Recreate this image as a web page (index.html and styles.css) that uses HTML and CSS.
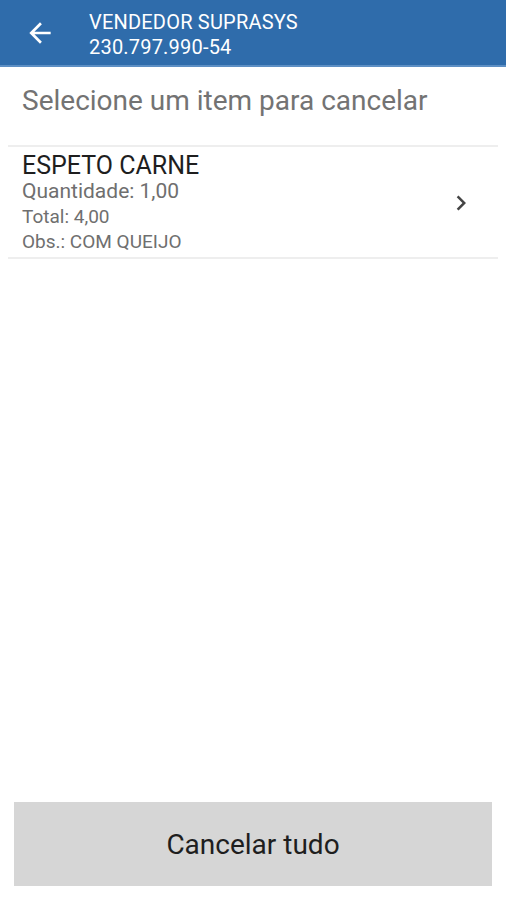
FILE: index.html
```html
<!DOCTYPE html>
<html lang="pt-BR">
<head>
    <meta charset="UTF-8">
    <meta name="viewport" content="width=device-width, initial-scale=1.0">
    <title>Cancelar item</title>
    <link rel="stylesheet" href="styles.css">
</head>
<body>
    <!-- barra superior -->
    <header class="app-bar">
        <button class="back-btn" aria-label="Voltar">
            <svg width="32" height="32" viewBox="0 0 24 24">
                <path d="M20 11H7.83l5.59-5.59L12 4l-8 8 8 8 1.41-1.41L7.83 13H20v-2z" fill="#fff"/>
            </svg>
        </button>
        <div class="app-title">
            <div>VENDEDOR SUPRASYS</div>
            <div>230.797.990-54</div>
        </div>
    </header>

    <main class="content">
        <p class="hint">Selecione um item para cancelar</p>

        <ul class="item-list">
            <li class="item-row">
                <div class="item-info">
                    <div class="item-name">ESPETO CARNE</div>
                    <div class="item-qty">Quantidade: 1,00</div>
                    <div class="item-small">Total: 4,00</div>
                    <div class="item-small">Obs.: COM QUEIJO</div>
                </div>
                <svg class="chevron" width="30" height="30" viewBox="0 0 24 24">
                    <path d="M8.59 16.59 13.17 12 8.59 7.41 10 6l6 6-6 6z" fill="#444"/>
                </svg>
            </li>
        </ul>
    </main>

    <div class="footer">
        <button class="cancel-all">Cancelar tudo</button>
    </div>
</body>
</html>
```
FILE: styles.css
```css
* {
    margin: 0;
    padding: 0;
    box-sizing: border-box;
}

body {
    height: 900px;
    display: flex;
    flex-direction: column;
    background: #fff;
    font-family: Roboto, 'Liberation Sans', sans-serif;
}

/* barra superior */
.app-bar {
    height: 67px;
    background: #2f6cab;
    border-bottom: 2px solid #5d8fc4;
    display: flex;
    align-items: center;
    color: #fff;
}

.back-btn {
    width: 48px;
    height: 48px;
    margin-left: 16px;
    margin-right: 25px;
    background: none;
    border: none;
    display: flex;
    align-items: center;
    justify-content: center;
}

.app-title {
    font-size: 20px;
    letter-spacing: 0.2px;
    line-height: 25px;
    margin-top: 4px;
}

/* conteudo */
.content {
    flex: 1;
    padding: 0 8px;
}

.hint {
    font-size: 28px;
    color: #737373;
    padding: 17px 14px 0;
    height: 78px;
}

.item-list {
    list-style: none;
    border-top: 2px solid #eeeeee;
    border-bottom: 2px solid #eeeeee;
}

.item-row {
    display: flex;
    align-items: center;
    padding: 5px 14px 3px 14px;
    height: 110px;
}

.item-info {
    flex: 1;
}

.item-name {
    font-size: 25px;
    color: #1e1e1e;
    line-height: 27px;
}

.item-qty {
    font-size: 21px;
    color: #6f6f6f;
    line-height: 25px;
}

.item-small {
    font-size: 19px;
    color: #6f6f6f;
    line-height: 25px;
}

.chevron {
    margin-right: 8px;
    margin-top: 0;
}

/* rodape */
.footer {
    padding: 0 14px 14px;
}

.cancel-all {
    width: 100%;
    height: 84px;
    background: #d6d6d6;
    border: none;
    font-family: Roboto, 'Liberation Sans', sans-serif;
    font-size: 28px;
    color: #1e1e1e;
}
```
